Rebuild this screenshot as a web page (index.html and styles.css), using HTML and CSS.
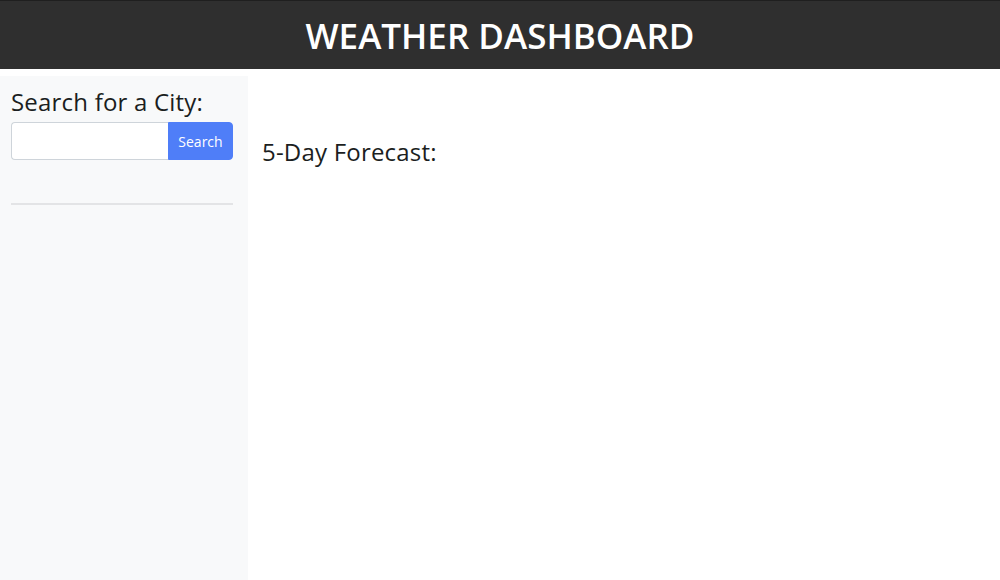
FILE: index.html
```html
<!DOCTYPE html>
<html lang="en">
<head>
<meta charset="utf-8">
<title>Weather Dashboard</title>
<link rel="stylesheet" href="styles.css">
</head>
<body>
<header class="topbar">
  <h1 class="title">WEATHER DASHBOARD</h1>
</header>
<main class="layout">
  <aside class="sidebar">
    <h2 class="side-title">Search for a City:</h2>
    <form class="search">
      <input class="search-input" type="text" aria-label="City">
      <button class="search-btn" type="button">Search</button>
    </form>
    <hr class="divider">
  </aside>
  <section class="content">
    <h2 class="forecast-title">5-Day Forecast:</h2>
  </section>
</main>
</body>
</html>
```

FILE: styles.css
```css
* { box-sizing: border-box; }
html, body { height: 100%; }
body {
  margin: 0;
  font-family: "Open Sans", "Noto Sans", sans-serif;
  color: #212529;
  background: #fff;
  display: flex;
  flex-direction: column;
}
.topbar {
  height: 69px;
  background: #2f2f2f;
  border-top: 1px solid #1f1f1f;
  display: flex;
  align-items: center;
  justify-content: center;
}
.title {
  margin: 0;
  color: #fff;
  font-size: 35px;
  font-weight: 600;
  letter-spacing: 0;
}
.layout {
  flex: 1;
  display: flex;
  margin-top: 7px;
}
.sidebar {
  width: 248px;
  background: #f8f9fa;
  padding: 12px 15px 0 11px;
}
.side-title {
  margin: 0 0 6px;
  font-size: 24px;
  font-weight: 500;
  line-height: 28px;
  letter-spacing: 0.2px;
  color: #1b1e21;
}
.search {
  display: flex;
  height: 38px;
}
.search-input {
  flex: 1;
  min-width: 0;
  border: 1px solid #ced4da;
  border-right: none;
  border-radius: 4px 0 0 4px;
  background: #fff;
  font: inherit;
}
.search-btn {
  width: 65px;
  border: 1px solid #4f7ef8;
  background: #4f7ef8;
  color: #fff;
  font-family: inherit;
  font-size: 14px;
  border-radius: 0 4px 4px 0;
  padding: 0;
}
.divider {
  margin: 43px 0 0;
  border: 0;
  border-top: 2px solid #e3e4e6;
}
.content {
  flex: 1;
  padding: 62px 14px 0;
}
.forecast-title {
  margin: 0;
  font-size: 24px;
  font-weight: 500;
  line-height: 28px;
  letter-spacing: 0.2px;
  color: #1b1e21;
}
```
